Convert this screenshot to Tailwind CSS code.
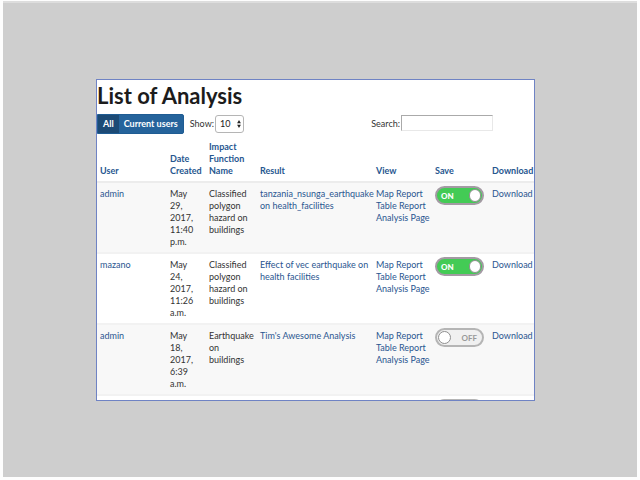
<!DOCTYPE html>
<html lang="en">
<head>
<meta charset="utf-8">
<title>List of Analysis</title>
<script src="https://cdn.jsdelivr.net/npm/@tailwindcss/browser@4"></script>
</head>
<body class="h-screen overflow-hidden bg-[#fdfdfd] pt-[1px] pr-[3px] pb-[3px] pl-[3px] font-['Lato','Liberation_Sans',sans-serif] text-[9px] leading-[12px] text-[#333]">
<div class="flex h-full flex-col border-t-2 border-[#dddddd] bg-[#cecece] pt-[76px] pr-[102px] pb-[76px] pl-[93px]">
  <main class="min-h-0 flex-1 overflow-hidden border border-[#6f83c4] bg-white">
    <h1 class="pt-[2px] text-[22px] leading-[28px] font-bold text-[#1c1c1c]">List of Analysis</h1>
    <div class="mt-[3px] flex h-[22px] items-center">
      <div class="flex h-[20px] overflow-hidden rounded-r-[2px] border border-[#1f5c93] bg-[#25639b] font-bold text-white">
        <button type="button" class="bg-[#1c4a75] px-[5px]">All</button>
        <button type="button" class="px-[5px]">Current users</button>
      </div>
      <label for="show" class="ml-[6px]">Show:</label>
      <div class="ml-[1px] grid items-center">
        <select id="show" class="col-start-1 row-start-1 h-[18px] w-[29px] appearance-none rounded-[3px] border border-[#b5b5b5] bg-white pl-[4px] text-[#222]"><option>10</option><option>25</option></select>
        <svg class="pointer-events-none col-start-1 row-start-1 mr-[3px] justify-self-end" width="4" height="8" viewBox="0 0 4 8" fill="#222" aria-hidden="true"><path d="M2 0 3.9 3.3H.1zM2 8 .1 4.7h3.8z"/></svg>
      </div>
      <div class="mr-[41px] ml-auto flex items-center gap-[1px]">
        <label for="search">Search:</label>
        <input id="search" type="search" class="-mt-[3px] h-[16px] w-[92px] appearance-none border border-t-[#aaa] border-r-[#e8e8e8] border-b-[#e8e8e8] border-l-[#aaa] bg-white px-1">
      </div>
    </div>
    <table class="mt-[6px] w-full table-fixed border-collapse text-left align-top">
      <colgroup><col class="w-[70px]"><col class="w-[39px]"><col class="w-[51px]"><col><col class="w-[59px]"><col class="w-[57px]"><col class="w-[45px]"></colgroup>
      <thead class="align-bottom text-[#26568f]">
        <tr class="border-b-2 border-[#ececec] [&>th]:pb-[4px] [&>th]:pl-[3px] [&>th]:font-bold"><th>User</th><th>Date Created</th><th>Impact Function Name</th><th>Result</th><th>View</th><th>Save</th><th>Download</th></tr>
      </thead>
      <tbody class="[&_a]:text-[#2a5690] [&_td]:pt-[5px] [&_td]:pb-[4px] [&_td]:pl-[3px] [&_td]:align-top [&>tr]:border-b-2 [&>tr]:border-[#f2f2f2] [&>tr:nth-child(odd)]:bg-[#f8f8f8]">
        <tr>
          <td><a href="#">admin</a></td><td>May<br>29,<br>2017,<br>11:40<br>p.m.</td><td>Classified polygon hazard on buildings</td>
          <td><a href="#">tanzania_nsunga_earthquake<br>on health_facilities</a></td>
          <td class="whitespace-nowrap"><a href="#">Map Report</a><br><a href="#">Table Report</a><br><a href="#">Analysis Page</a></td>
          <td class="leading-none"><label class="-mt-[2px] grid h-[19px] w-[49px] items-center"><input type="checkbox" checked aria-label="Save" class="col-start-1 row-start-1 h-[19px] w-[49px] appearance-none rounded-full border-2 border-[#a39aa3] bg-[#43cb55]"><span class="z-10 col-start-1 row-start-1 ml-[6px] text-[8px] font-black text-white">ON</span><span class="z-10 col-start-1 row-start-1 mr-[3px] h-[13px] w-[12px] justify-self-end rounded-full border border-[#8f8f8f] bg-white"></span></label></td>
          <td><a href="#">Download</a></td>
        </tr>
        <tr>
          <td><a href="#">mazano</a></td><td>May<br>24,<br>2017,<br>11:26<br>a.m.</td><td>Classified polygon hazard on buildings</td>
          <td><a href="#">Effect of vec earthquake on<br>health facilities</a></td>
          <td class="whitespace-nowrap"><a href="#">Map Report</a><br><a href="#">Table Report</a><br><a href="#">Analysis Page</a></td>
          <td class="leading-none"><label class="-mt-[2px] grid h-[19px] w-[49px] items-center"><input type="checkbox" checked aria-label="Save" class="col-start-1 row-start-1 h-[19px] w-[49px] appearance-none rounded-full border-2 border-[#a39aa3] bg-[#43cb55]"><span class="z-10 col-start-1 row-start-1 ml-[6px] text-[8px] font-black text-white">ON</span><span class="z-10 col-start-1 row-start-1 mr-[3px] h-[13px] w-[12px] justify-self-end rounded-full border border-[#8f8f8f] bg-white"></span></label></td>
          <td><a href="#">Download</a></td>
        </tr>
        <tr>
          <td><a href="#">admin</a></td><td>May<br>18,<br>2017,<br>6:39<br>a.m.</td><td>Earthquake on<br>buildings</td>
          <td><a href="#">Tim's Awesome Analysis</a></td>
          <td class="whitespace-nowrap"><a href="#">Map Report</a><br><a href="#">Table Report</a><br><a href="#">Analysis Page</a></td>
          <td class="leading-none"><label class="-mt-[2px] grid h-[19px] w-[49px] items-center"><input type="checkbox" aria-label="Save" class="col-start-1 row-start-1 h-[19px] w-[49px] appearance-none rounded-full border-2 border-[#b5b5b5] bg-[#f0f0f0]"><span class="z-10 col-start-1 row-start-1 mr-[7px] justify-self-end text-[8px] font-bold text-[#999]">OFF</span><span class="z-10 col-start-1 row-start-1 ml-[3px] h-[13px] w-[13px] rounded-full border border-[#8f8f8f] bg-white"></span></label></td>
          <td><a href="#">Download</a></td>
        </tr>
        <tr>
          <td></td><td></td><td></td><td></td><td></td>
          <td class="leading-none"><label class="-mt-[2px] grid h-[19px] w-[49px] items-center"><input type="checkbox" aria-label="Save" class="h-[19px] w-[49px] appearance-none rounded-full border-2 border-[#b5b5b5] bg-[#f0f0f0]"></label></td>
          <td></td>
        </tr>
      </tbody>
    </table>
  </main>
</div>
</body>
</html>
